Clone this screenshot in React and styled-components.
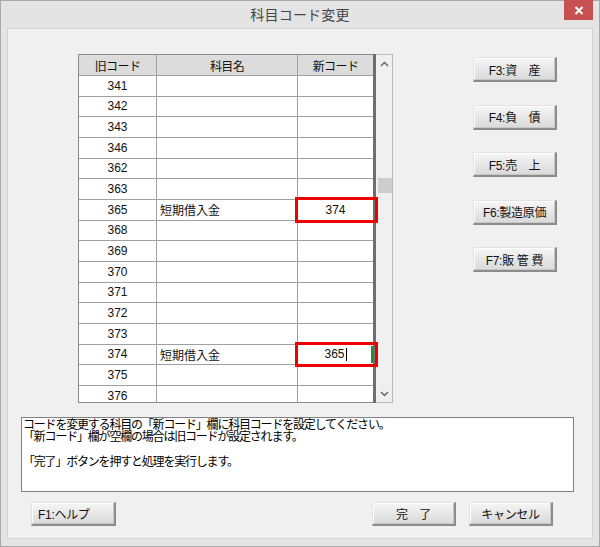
import React from 'react'
import styled, { createGlobalStyle } from 'styled-components'

const GlobalStyle = createGlobalStyle`
  html, body {
    margin: 0;
    padding: 0;
    background: #ffffff;
  }
  body {
    font-family: "Liberation Sans", "Noto Sans CJK JP", sans-serif;
    font-size: 12px;
    color: #000;
  }
`

const FONT = `"Liberation Sans", "Noto Sans CJK JP", sans-serif`

const Window = styled.div`
  width: 600px;
  height: 547px;
  box-sizing: border-box;
  border: 1px solid #a9a9a9;
  background: #e4e4e4;
  display: flex;
  flex-direction: column;
  padding: 0 6px 7px 6px;
  font-family: ${FONT};
`

const TitleBar = styled.div`
  height: 27px;
  display: grid;
  grid-template-columns: 1fr auto 1fr;
  align-items: start;
`

const Title = styled.div`
  grid-column: 2;
  font-size: 14px;
  line-height: 28px;
  color: #444;
  letter-spacing: 0.2px;
`

const CloseButton = styled.div`
  grid-column: 3;
  justify-self: end;
  width: 29px;
  height: 20px;
  margin-top: -1px;
  background: #c75050;
  display: flex;
  align-items: center;
  justify-content: center;
`

const Client = styled.div`
  flex: 1;
  border: 1px solid #d4d4d4;
  background: #f0f0f0;
  display: flex;
  flex-direction: column;
`

const TopSection = styled.div`
  display: flex;
  align-items: flex-start;
  padding: 25px 0 0 70px;
`

const GridFrame = styled.div`
  width: 315px;
  height: 349px;
  box-sizing: border-box;
  display: flex;
`

const TableArea = styled.div`
  width: 295px;
  height: 349px;
  box-sizing: border-box;
  border: 1px solid #8a8a8a;
  border-right: none;
  overflow-x: visible;
  overflow-y: clip;
  background: #fff;
  position: relative;
  z-index: 1;
`

const DarkBar = styled.div`
  width: 3px;
  background: #6e6e6e;
`

const Row = styled.div`
  display: flex;
  height: ${p => (p.$header ? '21px' : '20.67px')};
  box-sizing: border-box;
  border-bottom: 1px solid #a0a0a0;
  background: ${p => (p.$header ? '#dcdcdc' : '#fff')};
`

const Cell = styled.div`
  position: relative;
  width: ${p => p.$w}px;
  box-sizing: border-box;
  border-right: ${p => (p.$last ? 'none' : '1px solid #a0a0a0')};
  display: flex;
  align-items: center;
  justify-content: ${p => (p.$left ? 'flex-start' : 'center')};
  padding-left: ${p => (p.$left ? '3px' : '0')};
  font-size: 12px;
  color: #111;
  white-space: nowrap;
  letter-spacing: ${p => (p.$header ? '-0.6px' : '0')};
`

const Marker = styled.div`
  position: absolute;
  left: -3px;
  right: -5px;
  top: -3px;
  bottom: -3px;
  border: 3px solid #ee0000;
  pointer-events: none;
  z-index: 2;
`

const EditEdge = styled.div`
  position: absolute;
  right: 0;
  top: 1px;
  bottom: 1px;
  width: 2px;
  background: #1f8f2f;
`

const Caret = styled.span`
  display: inline-block;
  width: 1px;
  height: 13px;
  background: #000;
  margin-left: 1px;
`

const ScrollBar = styled.div`
  width: 17px;
  box-sizing: border-box;
  border: 1px solid #b8b8b8;
  border-left: none;
  background: #f0f0f0;
  display: flex;
  flex-direction: column;
`

const ArrowBox = styled.div`
  height: 17px;
  display: flex;
  align-items: center;
  justify-content: center;
`

const Track = styled.div`
  flex: 1;
  display: flex;
  flex-direction: column;
  align-items: center;
`

const Thumb = styled.div`
  width: 14px;
  height: 15px;
  margin-top: 106px;
  margin-left: 1px;
  background: #cdcdcd;
`

const SideButtons = styled.div`
  display: flex;
  flex-direction: column;
  gap: 22.5px;
  margin: 3px 0 0 80px;
`

const Button = styled.div`
  width: ${p => p.$w || 84}px;
  height: ${p => p.$h || 25}px;
  box-sizing: border-box;
  border-top: 1px solid #e2e2e2;
  border-left: 1px solid #e2e2e2;
  border-right: 2px solid #8c8c8c;
  border-bottom: 2px solid #8c8c8c;
  box-shadow: inset -1px -1px 0 #c8c8c8, inset 1px 1px 0 #ffffff;
  background: linear-gradient(#f6f6f6, #e4e4e4 60%, #dadada);
  display: flex;
  align-items: center;
  justify-content: ${p => (p.$left ? 'flex-start' : 'center')};
  padding-left: ${p => (p.$left ? '6px' : '0')};
  font-size: 12px;
  color: #111;
  white-space: pre;
  letter-spacing: -0.3px;
`

const MessageBox = styled.div`
  margin: 14px 0 0 13px;
  width: 553px;
  height: 75px;
  box-sizing: border-box;
  border: 1px solid #828282;
  background: #fff;
  padding: 1px 0 0 1px;
  font-size: 12px;
  line-height: 12.3px;
  letter-spacing: -1.2px;
  color: #000;
  white-space: pre;
`

const BottomRow = styled.div`
  display: flex;
  align-items: center;
  margin: 10px 0 0 23px;
`

const RightGroup = styled.div`
  display: flex;
  gap: 13px;
  margin-left: 256px;
`

const rows = [
  { code: '341' },
  { code: '342' },
  { code: '343' },
  { code: '346' },
  { code: '362' },
  { code: '363' },
  { code: '365', name: '短期借入金', next: '374', marked: true },
  { code: '368' },
  { code: '369' },
  { code: '370' },
  { code: '371' },
  { code: '372' },
  { code: '373' },
  { code: '374', name: '短期借入金', next: '365', marked: true, editing: true },
  { code: '375' },
  { code: '376' },
]

const sideButtons = ['F3:資　産', 'F4:負　債', 'F5:売　上', 'F6:製造原価', 'F7:販 管 費']

const Chevron = ({ up }) => (
  <svg width="9" height="6" viewBox="0 0 9 6">
    <polyline
      points={up ? '1,5 4.5,1.5 8,5' : '1,1 4.5,4.5 8,1'}
      fill="none"
      stroke="#606060"
      strokeWidth="1.4"
    />
  </svg>
)

export default function App() {
  return (
    <>
      <GlobalStyle />
      <Window>
        <TitleBar>
          <Title>科目コード変更</Title>
          <CloseButton>
            <svg width="10" height="9" viewBox="0 0 10 9">
              <path d="M1.5 1 L8.5 8 M8.5 1 L1.5 8" stroke="#fff" strokeWidth="2" />
            </svg>
          </CloseButton>
        </TitleBar>
        <Client>
          <TopSection>
            <GridFrame>
              <TableArea>
                <Row $header>
                  <Cell $w={78} $header>旧コード</Cell>
                  <Cell $w={141} $header>科目名</Cell>
                  <Cell $w={75} $header $last>新コード</Cell>
                </Row>
                {rows.map(r => (
                  <Row key={r.code}>
                    <Cell $w={78}>{r.code}</Cell>
                    <Cell $w={141} $left>{r.name}</Cell>
                    <Cell $w={75} $last>
                      {r.next}
                      {r.editing && <Caret />}
                      {r.editing && <EditEdge />}
                      {r.marked && <Marker />}
                    </Cell>
                  </Row>
                ))}
              </TableArea>
              <DarkBar />
              <ScrollBar>
                <ArrowBox><Chevron up /></ArrowBox>
                <Track><Thumb /></Track>
                <ArrowBox><Chevron /></ArrowBox>
              </ScrollBar>
            </GridFrame>
            <SideButtons>
              {sideButtons.map(b => (
                <Button key={b}>{b}</Button>
              ))}
            </SideButtons>
          </TopSection>
          <MessageBox>
            {'コードを変更する科目の「新コード」欄に科目コードを設定してください。\n「新コード」欄が空欄の場合は旧コードが設定されます。\n\n「完了」ボタンを押すと処理を実行します。'}
          </MessageBox>
          <BottomRow>
            <Button $w={85} $h={24} $left>F1:ヘルプ</Button>
            <RightGroup>
              <Button $h={24}>完　了</Button>
              <Button $h={24}>キャンセル</Button>
            </RightGroup>
          </BottomRow>
        </Client>
      </Window>
    </>
  )
}
